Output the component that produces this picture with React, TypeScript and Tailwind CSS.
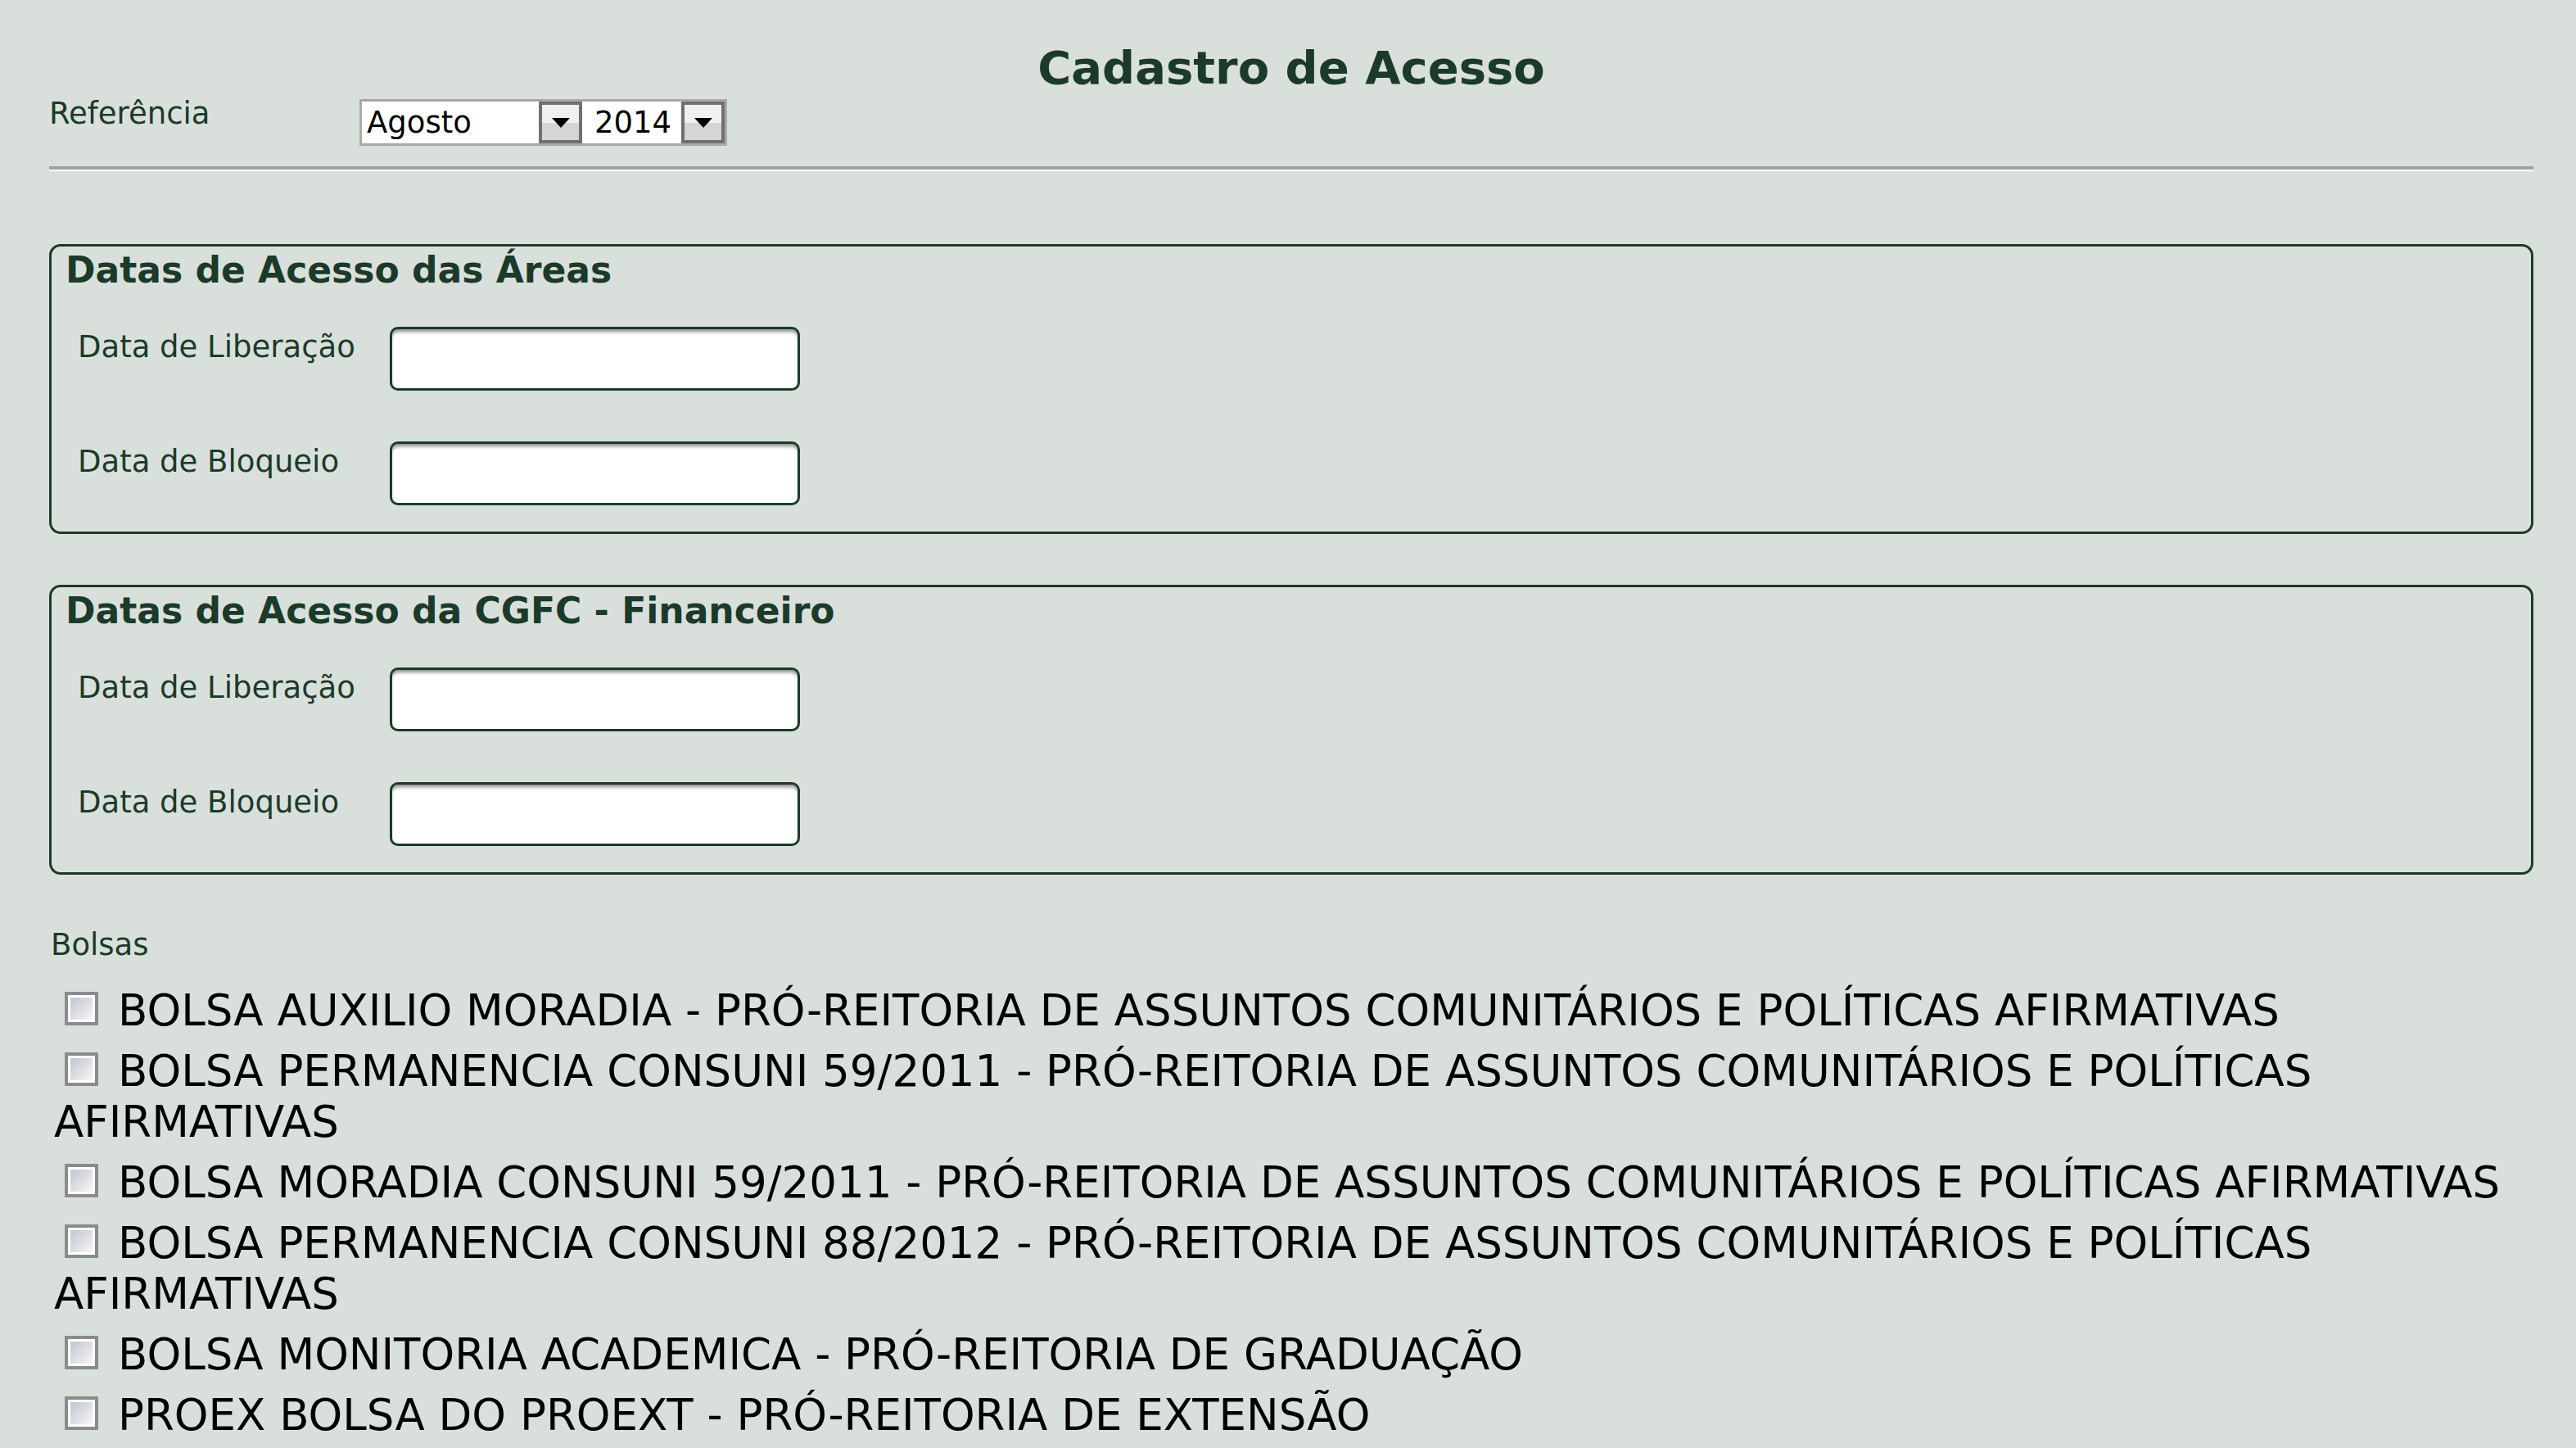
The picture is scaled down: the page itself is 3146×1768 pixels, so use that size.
import React from "react";

const bolsas = [
  "BOLSA AUXILIO MORADIA - PRÓ-REITORIA DE ASSUNTOS COMUNITÁRIOS E POLÍTICAS AFIRMATIVAS",
  "BOLSA PERMANENCIA CONSUNI 59/2011 - PRÓ-REITORIA DE ASSUNTOS COMUNITÁRIOS E POLÍTICAS AFIRMATIVAS",
  "BOLSA MORADIA CONSUNI 59/2011 - PRÓ-REITORIA DE ASSUNTOS COMUNITÁRIOS E POLÍTICAS AFIRMATIVAS",
  "BOLSA PERMANENCIA CONSUNI 88/2012 - PRÓ-REITORIA DE ASSUNTOS COMUNITÁRIOS E POLÍTICAS AFIRMATIVAS",
  "BOLSA MONITORIA ACADEMICA - PRÓ-REITORIA DE GRADUAÇÃO",
  "PROEX BOLSA DO PROEXT - PRÓ-REITORIA DE EXTENSÃO",
];

function DropButton() {
  return (
    <span className="flex h-full w-[53px] flex-col border-[4px] border-[#707070]">
      <span className="relative flex flex-1 flex-col">
        <span className="flex-1 bg-[#f0f0f0]" />
        <span className="flex-1 bg-[#d5d5d5]" />
        <span className="absolute inset-0 flex items-center justify-center">
          <svg width="22" height="12" viewBox="0 0 22 12">
            <path d="M0 0h22L11 12z" fill="#000" />
          </svg>
        </span>
      </span>
    </span>
  );
}

function DateField({ label }: { label: string }) {
  return (
    <div className="flex items-start">
      <label className="mt-[3px] w-[381px] text-[37px] leading-[44px] text-[#1b3a2a]">
        {label}
      </label>
      <input
        type="text"
        className="h-[78px] w-[501px] rounded-[10px] border-[3px] border-[#1c3a2a] bg-white shadow-[inset_0_5px_4px_-2px_rgba(0,0,0,0.45)] outline-none"
      />
    </div>
  );
}

function AccessBox({ title }: { title: string }) {
  return (
    <div className="rounded-[14px] border-[3px] border-[#1c3a2a] pb-[32px] pl-[17px] pt-[3px]">
      <h2 className="text-[44px] font-bold leading-[52px] text-[#1b3a2a]">{title}</h2>
      <div className="mt-[43px] flex flex-col gap-[62px] pl-[15px]">
        <DateField label="Data de Liberação" />
        <DateField label="Data de Bloqueio" />
      </div>
    </div>
  );
}

function CheckBox() {
  return (
    <span className="ml-[13px] mr-[24px] inline-block h-[41px] w-[41px] border-[4px] border-[#8b8b8b] bg-white p-[3px] align-baseline">
      <span className="block h-full w-full bg-gradient-to-br from-[#c3c6d0] to-[#f6f6f6]" />
    </span>
  );
}

export default function App() {
  return (
    <main
      className="min-h-screen bg-[#d9e0dc] pb-[20px] pl-[60px] pr-[52px] pt-[49px]"
      style={{ fontFamily: '"DejaVu Sans", Verdana, sans-serif' }}
    >
      <h1 className="text-center text-[56px] font-bold leading-[67px] text-[#1b3a2a]">
        Cadastro de Acesso
      </h1>

      <div className="flex items-start">
        <span className="mt-[1px] w-[379px] text-[37px] leading-[44px] text-[#1b3a2a]">
          Referência
        </span>
        <div className="mt-[5px] flex h-[57px] w-[449px] border-[3px] border-[#a8a8aa] bg-white">
          <div className="flex w-[269px]">
            <span className="flex-1 pl-[6px] text-[37px] leading-[51px] text-black">Agosto</span>
            <DropButton />
          </div>
          <div className="ml-[7px] flex flex-1">
            <span className="flex-1 pl-[8px] text-[37px] leading-[51px] text-black">2014</span>
            <DropButton />
          </div>
        </div>
      </div>

      <hr className="mt-[25px] border-b-[2px] border-t-[4px] border-b-white border-t-[#a1a1a1]" />

      <div className="mt-[89px] flex flex-col gap-[62px]">
        <AccessBox title="Datas de Acesso das Áreas" />
        <AccessBox title="Datas de Acesso da CGFC - Financeiro" />
      </div>

      <p className="ml-[2px] mt-[64px] text-[37px] leading-[44px] text-[#1b3a2a]">Bolsas</p>

      <div className="mt-[27px] pl-[6px]">
        {bolsas.map((b) => (
          <div key={b} className="mb-[12px] text-[53px] leading-[62px] text-black">
            <CheckBox />
            {b}
          </div>
        ))}
      </div>
    </main>
  );
}
